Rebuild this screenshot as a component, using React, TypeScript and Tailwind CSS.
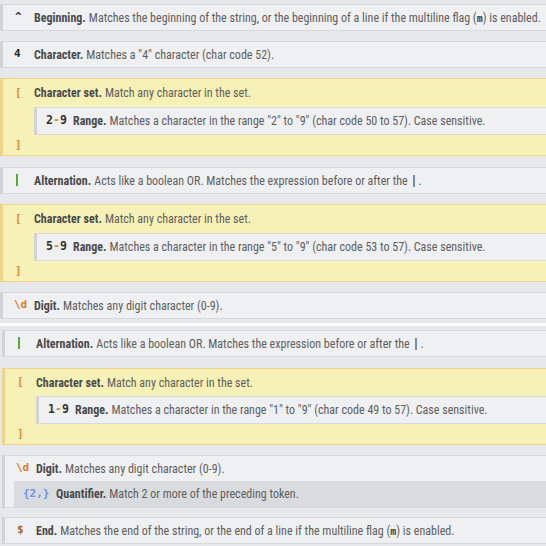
import React from "react";

const FONT = { fontFamily: '"Roboto Condensed", "Liberation Sans Narrow", "DejaVu Sans Condensed", Roboto, sans-serif' };
const MONO = { fontFamily: '"DejaVu Sans Mono", "Liberation Mono", monospace' };

function Tok({ children }: { children: React.ReactNode }) {
  return (
    <span className="w-[20px] shrink-0 text-[11px] font-bold" style={MONO}>
      {children}
    </span>
  );
}

function Row({ tok, label, desc, className = "" }: { tok: React.ReactNode; label: string; desc: React.ReactNode; className?: string }) {
  return (
    <div className={`flex items-center h-[27px] pl-[11px] bg-[#eff0f2] border-l-[3px] border-l-[#d2d3d5] border-y border-y-[#d8d9db] whitespace-nowrap ${className}`}>
      {tok}
      <span className="font-bold text-[#4a4a4a] mr-[3px]">{label}</span>
      <span className="text-[#5e5e5e]">{desc}</span>
    </div>
  );
}

function M() {
  return <span className="font-bold text-[#444] text-[10px]" style={MONO}>m</span>;
}

function Bar() {
  return <span className="inline-block w-[2px] h-[12px] bg-[#6b8fb8] mx-[3px] align-middle" />;
}

function Green() {
  return <span className="inline-block w-[2px] h-[12px] bg-[#55aa33] ml-[2px] align-middle" />;
}

function CharSet({ a, b, c1, c2, className = "", top = "h-[28px]" }: { a: string; b: string; c1: string; c2: string; className?: string; top?: string }) {
  return (
    <div className={`bg-[#f6f1b6] border-l-[3px] border-l-[#efd58a] border-y border-y-[#efd58a] whitespace-nowrap ${className}`}>
      <div className={`flex items-center ${top} pl-[11px]`}>
        <Tok><span className="text-[#e2883a] pl-[1px]">[</span></Tok>
        <span className="font-bold text-[#4a4a4a] mr-[3px]">Character set.</span>
        <span className="text-[#5e5e5e]">Match any character in the set.</span>
      </div>
      <div className="ml-[31px] flex items-center h-[28px] pl-[9px] bg-[#eff0f2] border-l-[3px] border-l-[#d2d3d5] border-y border-y-[#d8d9db]">
        <span className="w-[27px] shrink-0 text-[11.5px] font-bold text-[#333]" style={MONO}>
          {a}<span className="text-[#e2883a]">-</span>{b}
        </span>
        <span className="font-bold text-[#4a4a4a] mr-[3px]">Range.</span>
        <span className="text-[#5e5e5e]">
          Matches a character in the range "{a}" to "{b}" (char code {c1} to {c2}). Case sensitive.
        </span>
      </div>
      <div className="flex items-center h-[20px] pl-[11px]">
        <Tok><span className="text-[#e2883a] pl-[1px]">]</span></Tok>
      </div>
    </div>
  );
}

export default function App() {
  return (
    <div className="w-[546px] h-[546px] overflow-hidden bg-[#e7e8e9] text-[12px] pt-[4px]" style={FONT}>
      <div className="w-[620px] flex flex-col">
        <Row
          tok={<Tok><span className="text-[#333] pl-[1px]">^</span></Tok>}
          label="Beginning."
          desc={<>Matches the beginning of the string, or the beginning of a line if the multiline flag (<M />) is enabled.</>}
        />
        <Row className="mt-[10px]" tok={<Tok><span className="text-[#222]">4</span></Tok>} label="Character." desc={'Matches a "4" character (char code 52).'} />
        <CharSet className="mt-[10px]" a="2" b="9" c1="50" c2="57" />
        <Row
          className="mt-[11px]"
          tok={<Tok><Green /></Tok>}
          label="Alternation."
          desc={<>Acts like a boolean OR. Matches the expression before or after the <Bar />.</>}
        />
        <CharSet className="mt-[10px]" a="5" b="9" c1="53" c2="57" />
        <Row className="mt-[10px]" tok={<Tok><span className="text-[#e07a25]">\d</span></Tok>} label="Digit." desc="Matches any digit character (0-9)." />
        <div className="h-[3px] bg-white mt-[4px]" />
        <div className="ml-[2px] flex flex-col">
          <Row
            className="mt-[4px]"
            tok={<Tok><Green /></Tok>}
            label="Alternation."
            desc={<>Acts like a boolean OR. Matches the expression before or after the <Bar />.</>}
          />
          <CharSet className="mt-[11px]" top="h-[27px]" a="1" b="9" c1="49" c2="57" />
          <div className="mt-[10px] bg-[#eff0f2] border-l-[3px] border-l-[#d2d3d5] border-y border-y-[#d8d9db] whitespace-nowrap">
            <div className="flex items-center h-[25px] pl-[11px]">
              <Tok><span className="text-[#e07a25]">\d</span></Tok>
              <span className="font-bold text-[#4a4a4a] mr-[3px]">Digit.</span>
              <span className="text-[#5e5e5e]">Matches any digit character (0-9).</span>
            </div>
            <div className="ml-[9px] flex items-center h-[26px] pl-[9px] bg-[#d9dcde]">
              <span className="w-[33px] shrink-0 text-[11px] font-bold text-[#6a8ff0]" style={MONO}>{"{2,}"}</span>
              <span className="font-bold text-[#4a4a4a] mr-[3px]">Quantifier.</span>
              <span className="text-[#5e5e5e]">Match 2 or more of the preceding token.</span>
            </div>
          </div>
          <Row
            className="mt-[9px]"
            tok={<Tok><span className="text-[#a8642a] pl-[1px]">$</span></Tok>}
            label="End."
            desc={<>Matches the end of the string, or the end of a line if the multiline flag (<M />) is enabled.</>}
          />
        </div>
      </div>
    </div>
  );
}
